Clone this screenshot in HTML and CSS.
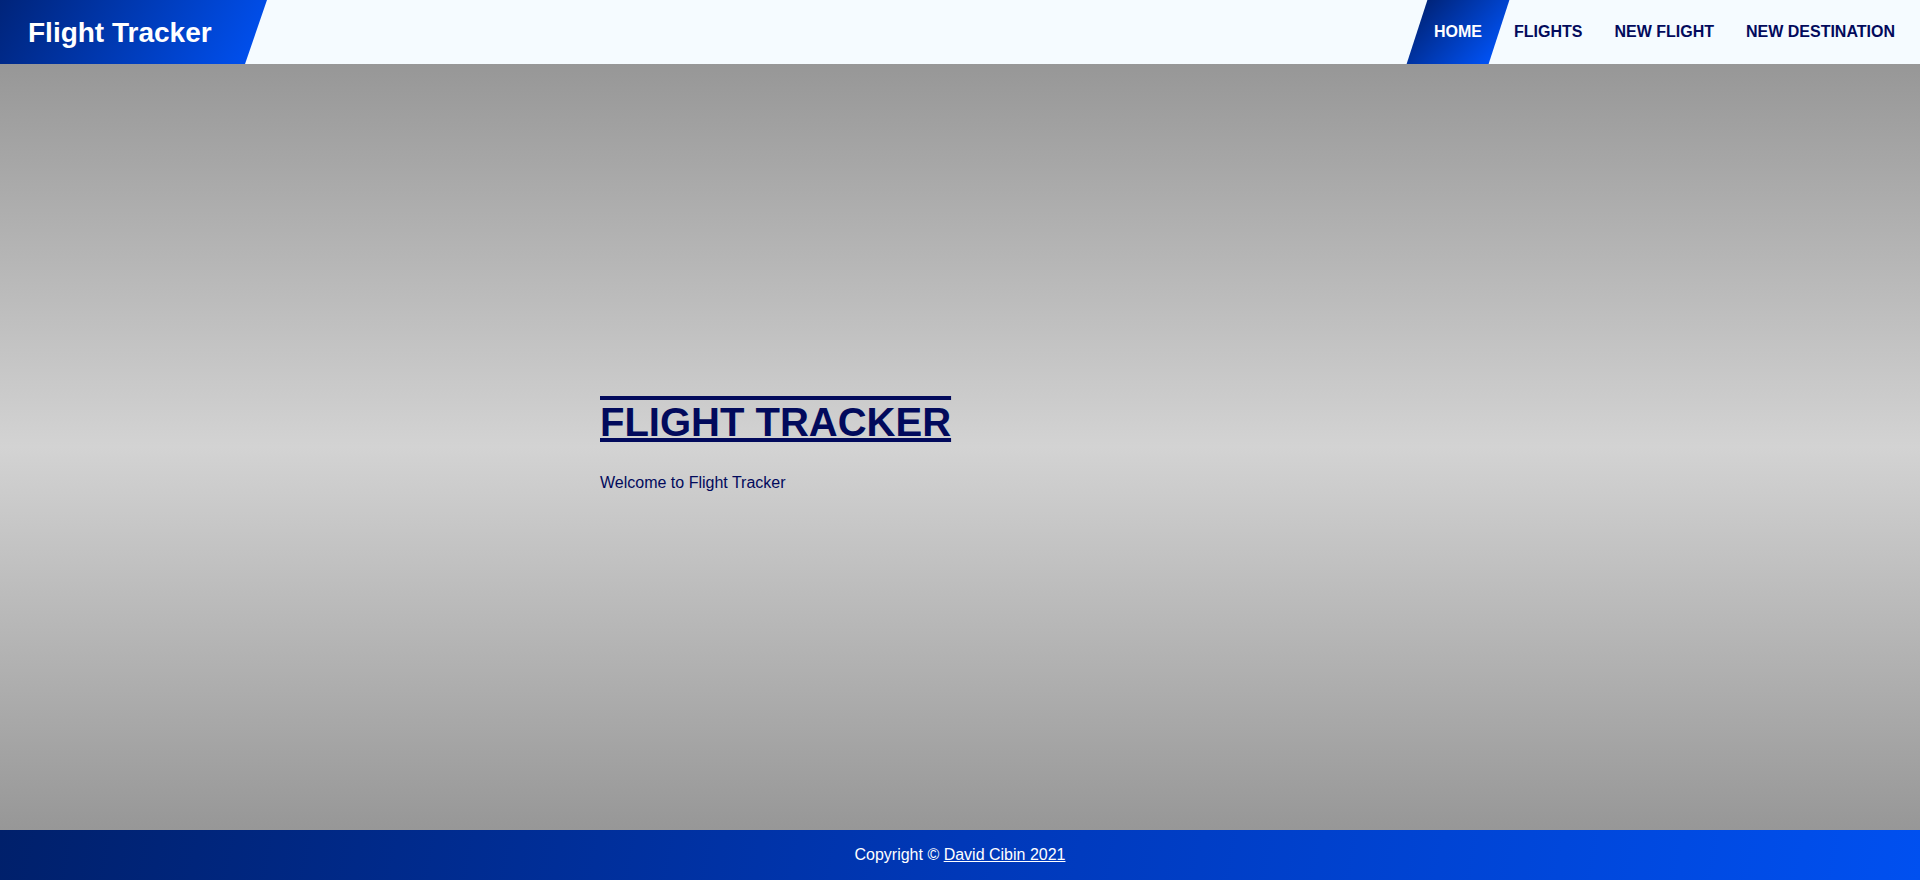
FILE: index.html
```html
<!DOCTYPE html>
<html lang="en">
<head>
<meta charset="utf-8">
<title>Flight Tracker</title>
<link rel="stylesheet" href="styles.css">
</head>
<body>
<header class="topbar">
  <a class="brand" href="#">Flight Tracker</a>
  <nav class="nav">
    <a class="nav-link active" href="#">HOME</a>
    <a class="nav-link" href="#">FLIGHTS</a>
    <a class="nav-link" href="#">NEW FLIGHT</a>
    <a class="nav-link" href="#">NEW DESTINATION</a>
  </nav>
</header>
<main class="hero">
  <div class="container">
    <h1 class="title">FLIGHT TRACKER</h1>
    <p class="lead">Welcome to Flight Tracker</p>
  </div>
</main>
<footer class="footer">
  Copyright ©&nbsp;<a href="#">David Cibin 2021</a>
</footer>
</body>
</html>
```
FILE: styles.css
```css
* { box-sizing: border-box; }
html, body { margin: 0; padding: 0; }
body {
  font-family: "Liberation Sans", Arial, sans-serif;
  min-height: 100vh;
  display: flex;
  flex-direction: column;
  color: #020a5c;
}
.topbar {
  height: 64px;
  background: #f5fbff;
  display: flex;
  justify-content: space-between;
  align-items: stretch;
}
.brand {
  width: 267px;
  padding-left: 28px;
  display: flex;
  align-items: center;
  padding-top: 2px;
  font-size: 28px;
  font-weight: bold;
  color: #ffffff;
  text-decoration: none;
  background: linear-gradient(120deg, #00247a 0%, #0052f5 100%);
  clip-path: polygon(0 0, 100% 0, calc(100% - 22px) 100%, 0 100%);
}
.nav {
  display: flex;
  align-items: stretch;
  padding-right: 9px;
}
.nav-link {
  position: relative;
  display: flex;
  align-items: center;
  padding: 0 16px;
  font-size: 16px;
  font-weight: bold;
  color: #020a5c;
  text-decoration: none;
}
.nav-link.active {
  color: #ffffff;
  z-index: 0;
}
.nav-link.active::before {
  content: "";
  position: absolute;
  top: 0;
  bottom: 0;
  left: -1px;
  right: -1px;
  transform: skewX(-18deg);
  background: linear-gradient(120deg, #00247a 0%, #0052f5 100%);
  z-index: -1;
}
.hero {
  flex: 1;
  display: flex;
  align-items: center;
  justify-content: center;
  padding-bottom: 12px;
  background: linear-gradient(to bottom, #979797 0%, #d3d3d3 50%, #979797 100%);
}
.container {
  width: 720px;
}
.title {
  margin: 26.8px 0 29px;
  font-size: 40px;
  font-weight: bold;
  color: #020a5c;
  text-decoration: underline overline;
  text-decoration-thickness: 4px;
}
.lead {
  margin: 16px 0;
  font-size: 16px;
  color: #020a5c;
}
.footer {
  height: 50px;
  display: flex;
  align-items: center;
  justify-content: center;
  font-size: 16px;
  color: #ffffff;
  background: linear-gradient(100deg, #00206b 0%, #0038b8 50%, #0050f0 100%);
}
.footer a {
  color: #ffffff;
  text-decoration: underline;
}
```
